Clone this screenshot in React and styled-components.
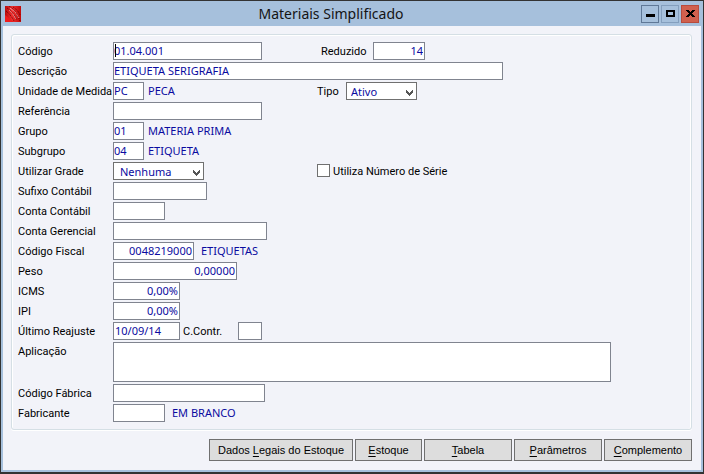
import React from "react";
import styled, { createGlobalStyle } from "styled-components";

const uiFont = '"Noto Sans", "Open Sans", sans-serif';
const labelFont = 'Roboto, "Liberation Sans", sans-serif';

const GlobalStyle = createGlobalStyle`
  *, *::before, *::after { box-sizing: border-box; }
  body { margin: 0; background: #333333; }
  input, select, textarea, button { font: inherit; color: inherit; margin: 0; border-radius: 0; outline: none; }
`;

const Window = styled.main`
  display: flex;
  flex-direction: column;
  min-height: 100vh;
  padding: 0 2px 2px;
  border: 1px solid #333333;
  border-bottom-width: 2px;
  background: #a6c0dc;
  color: #000000;
  font: 11px/18px ${uiFont};
`;

const TitleBar = styled.header`
  display: flex;
  align-items: center;
  height: 25px;
  padding: 0 2px;
`;

const TitleButtons = styled.div`
  display: flex;
  gap: 2px;
`;

const Title = styled.h1`
  flex: 1;
  margin: 0;
  color: #141414;
  font: 400 14px/26px "Noto Sans", "Open Sans", sans-serif;
  text-align: center;
`;

const CaptionButton = styled.button`
  display: flex;
  align-items: center;
  justify-content: center;
  width: 18px;
  height: 18px;
  padding: 0;
  border: 1px solid ${({ $edge }) => $edge};
  background: ${({ $fill }) => $fill};
`;

const Client = styled.div`
  flex: 1;
  padding: 8px 9px 9px 8px;
  background: #f2f3f9;
`;

const Panel = styled.form`
  padding: 7px 6px 5px;
  border: 1px solid #d5dfe5;
  border-radius: 3px;
  box-shadow: inset 1px 1px #ffffff, inset -1px 0 #ffffff, 0 1px #ffffff;
`;

const Row = styled.div`
  display: grid;
  grid-template-columns: 95px 204px 1fr;
  align-items: start;
`;

const Label = styled.label`
  font-family: ${labelFont};
  line-height: 20px;
  white-space: nowrap;
`;

const Cell = styled.div`
  display: flex;
  align-items: flex-start;
  grid-column: ${({ $wide }) => ($wide ? "2 / -1" : "auto")};
  position: relative;
  color: #0a0aa0;
`;

const SideLabel = styled(Label)`
  width: ${({ $w }) => $w}px;
  padding-left: ${({ $indent }) => $indent || 0}px;
  color: #000000;
`;

const Field = styled.input`
  width: ${({ $w }) => $w}px;
  height: 18px;
  padding: 0 ${({ $pad }) => $pad || 0}px;
  border: 1px solid #80848f;
  background: #ffffff;
  text-align: ${({ $right }) => ($right ? "right" : "left")};
`;

const TextArea = styled.textarea`
  width: 100%;
  max-width: 498px;
  height: 40px;
  && { margin-bottom: 2px; }
  padding: 1px;
  border: 1px solid #80848f;
  background: #ffffff;
  resize: none;
`;

const Caption = styled.output`
  padding-left: ${({ $gap }) => $gap || 4}px;
  white-space: nowrap;
`;

const Caret = styled.span`
  position: absolute;
  top: 2px;
  left: 2px;
  width: 1px;
  height: 13px;
  background: #000000;
`;

const SelectBox = styled.div`
  display: flex;
  position: relative;
  width: ${({ $w }) => $w}px;

  svg { position: absolute; right: 4px; top: 8px; pointer-events: none; }
`;

const Select = styled.select`
  appearance: none;
  width: 100%;
  height: 18px;
  padding: 0 16px 0 ${({ $pad }) => $pad}px;
  border: 1px solid #707070;
  background: #ffffff;
`;

const Check = styled.input`
  && { margin-top: 2px; }
  appearance: none;
  width: 13px;
  height: 13px;
  border: 1px solid #707070;
  background: #ffffff;

  &:checked { box-shadow: inset 0 0 0 2px #ffffff, inset 0 0 0 6px #333333; }
`;

const Actions = styled.nav`
  display: flex;
  justify-content: flex-end;
  gap: 2px;
  padding-top: 9px;
`;

const ActionButton = styled.button`
  width: ${({ $w }) => $w}px;
  height: 22px;
  padding: 0;
  border: 1px solid #707070;
  background: #dddddd;
  font: 11px/20px "Liberation Sans", sans-serif;
  white-space: nowrap;

  u { text-underline-offset: 2px; }
`;

const AppIcon = () => (
  <svg width="16" height="16" viewBox="0 0 16 16" aria-hidden="true">
    <defs>
      <linearGradient id="red" x1="0" y1="0" x2="1" y2="0">
        <stop offset="0" stopColor="#b80c0c" />
        <stop offset="0.45" stopColor="#f03030" />
        <stop offset="1" stopColor="#c00a0a" />
      </linearGradient>
    </defs>
    <rect width="16" height="16" fill="url(#red)" />
    <path d="M0 9L9 16H0z" fill="#ee1c1c" />
    <path d="M5 2Q11 5 14 12M4 4Q8 7 11 13" stroke="#ff9a9a" fill="none" />
    <path d="M4 0Q11 4 15 15M2 2Q8 6 12 14M1 5Q6 9 9 15M8 1Q13 4 15 9" stroke="#5a0000" fill="none" strokeDasharray="1 1" />
  </svg>
);

const Chevron = () => (
  <svg width="7" height="6" viewBox="0 0 7 6" aria-hidden="true">
    <path d="M0 0h1v1h1v1h1v1h1V2h1V1h1V0h1v3H6v1H5v1H4v1H3V5H2V4H1V3H0z" fill="#555555" shapeRendering="crispEdges" />
  </svg>
);

function DropDown({ id, w, pad, value }) {
  return (
    <SelectBox $w={w}>
      <Select id={id} $pad={pad} defaultValue={value}>
        <option>{value}</option>
      </Select>
      <Chevron />
    </SelectBox>
  );
}

function FormRow({ id, label, w, value = "", right, pad, caption, gap, side, wide, children }) {
  return (
    <Row>
      <Label htmlFor={id}>{label}</Label>
      <Cell $wide={wide}>
        {children || <Field id={id} $w={w} $right={right} $pad={pad} defaultValue={value} />}
        {id === "codigo" && <Caret />}
        {caption && <Caption htmlFor={id} $gap={gap}>{caption}</Caption>}
      </Cell>
      {side && <Cell>{side}</Cell>}
    </Row>
  );
}

const actions = [
  ["Dados ", "L", "egais do Estoque", 144],
  ["", "E", "stoque", 67],
  ["", "T", "abela", 88],
  ["", "P", "arâmetros", 88],
  ["", "C", "omplemento", 88],
];

export default function App() {
  return (
    <>
      <GlobalStyle />
      <Window>
        <TitleBar>
          <AppIcon />
          <Title>Materiais Simplificado</Title>
          <TitleButtons>
            <CaptionButton aria-label="Minimizar" $edge="#5f7897" $fill="#a6c0dc">
              <svg width="9" height="9" viewBox="0 0 9 9"><path d="M0 5h9v3H0z" /></svg>
            </CaptionButton>
            <CaptionButton aria-label="Maximizar" $edge="#849fbe" $fill="#a6c0dc">
              <svg width="9" height="7" viewBox="0 0 9 7"><path d="M1 1h7v5H1z" fill="none" stroke="#000" strokeWidth="2" /></svg>
            </CaptionButton>
            <CaptionButton aria-label="Fechar" $edge="#b84b3d" $fill="#d0604e">
              <svg width="9" height="7" viewBox="0 0 9 7" shapeRendering="crispEdges">
                <path d="M0 0h3v1h1v1h1V1h1V0h3v1H8v1H7v1H6v1h1v1h1v1h1v1H6V6H5V5H4v1H3v1H0V6h1V5h1V4h1V3H2V2H1V1H0z" />
              </svg>
            </CaptionButton>
          </TitleButtons>
        </TitleBar>
        <Client>
          <Panel>
            <FormRow id="codigo" label="Código" w={149} value="01.04.001"
              side={<><SideLabel htmlFor="reduzido" $w={56} $indent={4}>Reduzido</SideLabel><Field id="reduzido" $w={52} $right $pad={1} defaultValue="14" /></>} />
            <FormRow id="descricao" label="Descrição" w={390} value="ETIQUETA SERIGRAFIA" wide />
            <FormRow id="unidade" label="Unidade de Medida" w={31} value="PC" caption="PECA"
              side={<><SideLabel htmlFor="tipo" $w={29}>Tipo</SideLabel><DropDown id="tipo" w={71} pad={4} value="Ativo" /></>} />
            <FormRow id="referencia" label="Referência" w={149} />
            <FormRow id="grupo" label="Grupo" w={31} value="01" caption="MATERIA PRIMA" />
            <FormRow id="subgrupo" label="Subgrupo" w={31} value="04" caption="ETIQUETA" />
            <FormRow id="grade" label="Utilizar Grade"
              side={<><Check type="checkbox" id="serie" /><SideLabel htmlFor="serie" $indent={3}>Utiliza Número de Série</SideLabel></>}>
              <DropDown id="grade" w={91} pad={6} value="Nenhuma" />
            </FormRow>
            <FormRow id="sufixo" label="Sufixo Contábil" w={94} />
            <FormRow id="conta" label="Conta Contábil" w={52} />
            <FormRow id="gerencial" label="Conta Gerencial" w={154} />
            <FormRow id="fiscal" label="Código Fiscal" w={81} value="0048219000" right pad={1} caption="ETIQUETAS" gap={7} />
            <FormRow id="peso" label="Peso" w={124} value="0,00000" right pad={1} />
            <FormRow id="icms" label="ICMS" w={67} value="0,00%" right pad={1} />
            <FormRow id="ipi" label="IPI" w={67} value="0,00%" right pad={1} />
            <FormRow id="reajuste" label="Último Reajuste" wide>
              <Field id="reajuste" $w={67} $pad={1} defaultValue="10/09/14" />
              <SideLabel htmlFor="ccontr" $w={58} $indent={3}>C.Contr.</SideLabel>
              <Field id="ccontr" $w={24} />
            </FormRow>
            <FormRow id="aplicacao" label="Aplicação" wide><TextArea id="aplicacao" /></FormRow>
            <FormRow id="fabrica" label="Código Fábrica" w={152} />
            <FormRow id="fabricante" label="Fabricante" w={52} caption="EM BRANCO" gap={7} />
          </Panel>
          <Actions>
            {actions.map(([before, key, after, w]) => (
              <ActionButton key={key} $w={w} type="button">{before}<u>{key}</u>{after}</ActionButton>
            ))}
          </Actions>
        </Client>
      </Window>
    </>
  );
}
